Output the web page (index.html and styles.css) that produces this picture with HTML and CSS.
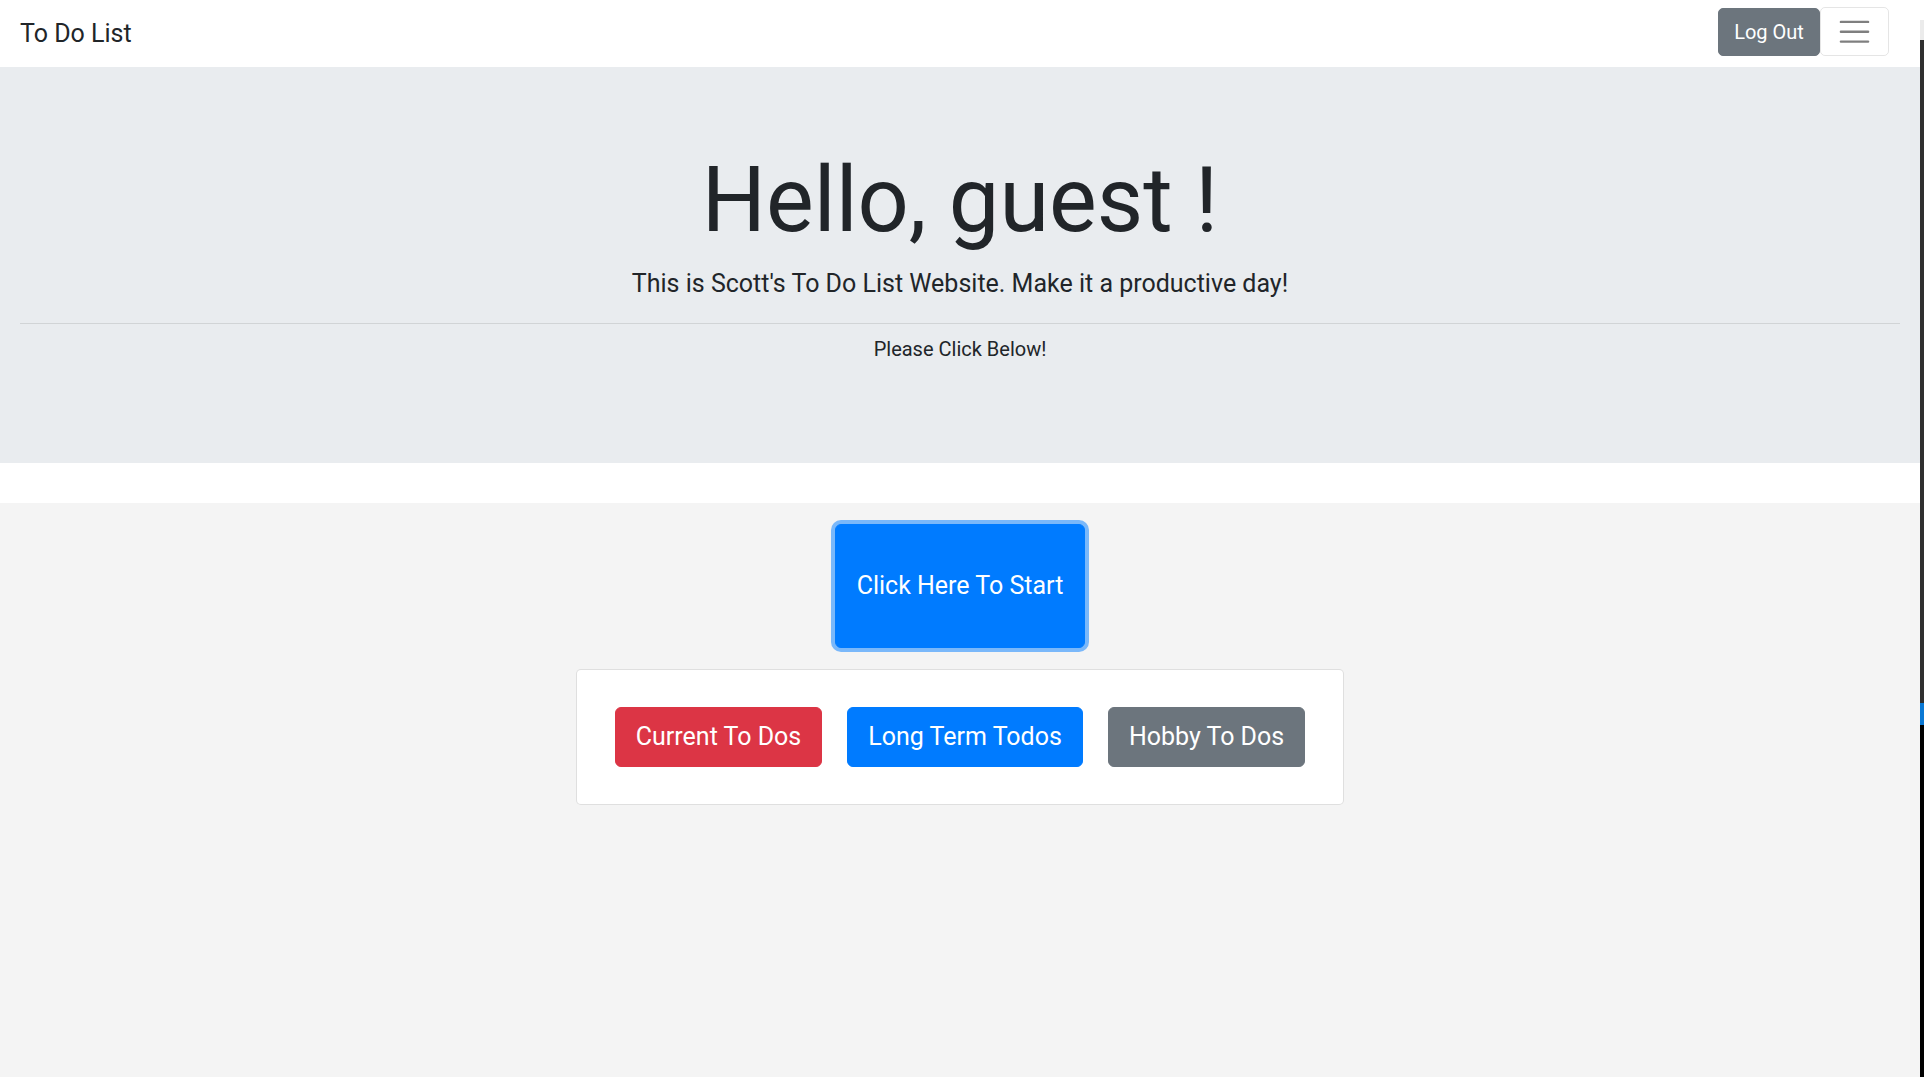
FILE: index.html
```html
<!DOCTYPE html>
<html lang="en">
<head>
<meta charset="utf-8">
<title>To Do List</title>
<link rel="stylesheet" href="styles.css">
</head>
<body>
<div class="page">
  <nav class="navbar">
    <a class="brand" href="#">To Do List</a>
    <div class="nav-actions">
      <button class="btn btn-secondary btn-logout">Log Out</button>
      <button class="toggler" aria-label="Toggle navigation">
        <svg class="toggler-icon" viewBox="0 0 30 30" width="37.5" height="37.5">
          <path stroke="rgba(0,0,0,0.5)" stroke-width="2" stroke-linecap="round" stroke-miterlimit="10" d="M4 7h22M4 15h22M4 23h22"/>
        </svg>
      </button>
    </div>
  </nav>
  <header class="jumbotron">
    <h1 class="display">Hello, guest !</h1>
    <p class="lead">This is Scott's To Do List Website. Make it a productive day!</p>
    <hr class="divider">
    <p class="note">Please Click Below!</p>
  </header>
  <main class="main">
    <button class="btn-start">Click Here To Start</button>
    <div class="card">
      <button class="btn btn-lg btn-danger">Current To Dos</button>
      <button class="btn btn-lg btn-primary">Long Term Todos</button>
      <button class="btn btn-lg btn-secondary">Hobby To Dos</button>
    </div>
  </main>
</div>
<div class="scrollbar">
  <div class="sb-top"></div>
  <div class="sb-arrow"></div>
  <div class="sb-track"></div>
  <div class="sb-thumb"></div>
  <div class="sb-rest"></div>
</div>
</body>
</html>
```

FILE: styles.css
```css
* { box-sizing: border-box; }

html, body {
  margin: 0;
  height: 100%;
}

body {
  display: flex;
  font-family: Roboto, "Liberation Sans", Arial, sans-serif;
  color: #212529;
  background: #ffffff;
  overflow: hidden;
}

.page {
  flex: 1;
  display: flex;
  flex-direction: column;
  min-width: 0;
}

/* Navbar */
.navbar {
  height: 67px;
  flex: none;
  display: flex;
  align-items: center;
  justify-content: space-between;
  padding: 0 31px 0 20px;
  background: #ffffff;
}

.brand {
  font-size: 25px;
  line-height: 37.5px;
  color: #212529;
  text-decoration: none;
}

.nav-actions {
  align-self: flex-start;
  margin-top: 7px;
  display: flex;
  align-items: flex-start;
}

.btn {
  font-family: Roboto, "Liberation Sans", Arial, sans-serif;
  color: #ffffff;
  border: 1px solid transparent;
  border-radius: 5px;
  font-size: 20px;
  line-height: 30px;
  padding: 8px 15px;
  cursor: pointer;
}

.btn-logout {
  margin-top: 1px;
  height: 48px;
  width: 102px;
  padding: 0;
}

.btn-secondary {
  background: #6c757d;
  border-color: #6c757d;
}

.btn-danger {
  background: #dc3545;
  border-color: #dc3545;
}

.btn-primary {
  background: #007bff;
  border-color: #007bff;
}

.toggler {
  width: 69px;
  height: 49px;
  padding: 5px 15px;
  background: transparent;
  border: 1px solid rgba(0, 0, 0, 0.1);
  border-radius: 5px;
  display: flex;
  align-items: center;
  justify-content: center;
}

.toggler-icon {
  display: block;
}

/* Jumbotron */
.jumbotron {
  flex: none;
  background: #e9ecef;
  padding: 80px 20px;
  margin-bottom: 40px;
  text-align: center;
}

.display {
  margin: 0 0 10px;
  font-size: 90px;
  font-weight: 400;
  line-height: 1.2;
}

.lead {
  margin: 0 0 20px;
  font-size: 25px;
  font-weight: 400;
  line-height: 1.5;
}

.divider {
  margin: 0 0 10px;
  border: 0;
  border-top: 1px solid rgba(0, 0, 0, 0.1);
}

.note {
  margin: 0 0 19.5px;
  font-size: 20px;
  line-height: 30px;
}

/* Main */
.main {
  flex: 1;
  background: #f4f4f4;
  padding-top: 20.5px;
  display: flex;
  flex-direction: column;
  align-items: center;
}

.btn-start {
  width: 250px;
  height: 124px;
  background: #007bff;
  border: 1px solid #007bff;
  border-radius: 6px;
  color: #ffffff;
  font-family: Roboto, "Liberation Sans", Arial, sans-serif;
  font-size: 25px;
  box-shadow: 0 0 0 4px rgba(0, 123, 255, 0.5);
  cursor: pointer;
}

.card {
  margin-top: 21px;
  width: 768px;
  height: 136px;
  background: #ffffff;
  border: 1px solid rgba(0, 0, 0, 0.125);
  border-radius: 5px;
  display: flex;
  align-items: center;
  justify-content: center;
  gap: 25px;
}

.btn-lg {
  font-size: 25px;
  line-height: 37.5px;
  padding: 10px 20px;
  border-radius: 6px;
  height: 60px;
}

/* Right-side scrollbar strip */
.scrollbar {
  width: 4px;
  flex: none;
  display: flex;
  flex-direction: column;
}

.sb-top { height: 20px; background: #ffffff; }
.sb-arrow { height: 20px; background: #ebebeb; }
.sb-track { height: 663px; background: #2f2f2f; }
.sb-thumb { height: 22px; background: #0a78d4; }
.sb-rest { flex: 1; background: #000000; }
```
